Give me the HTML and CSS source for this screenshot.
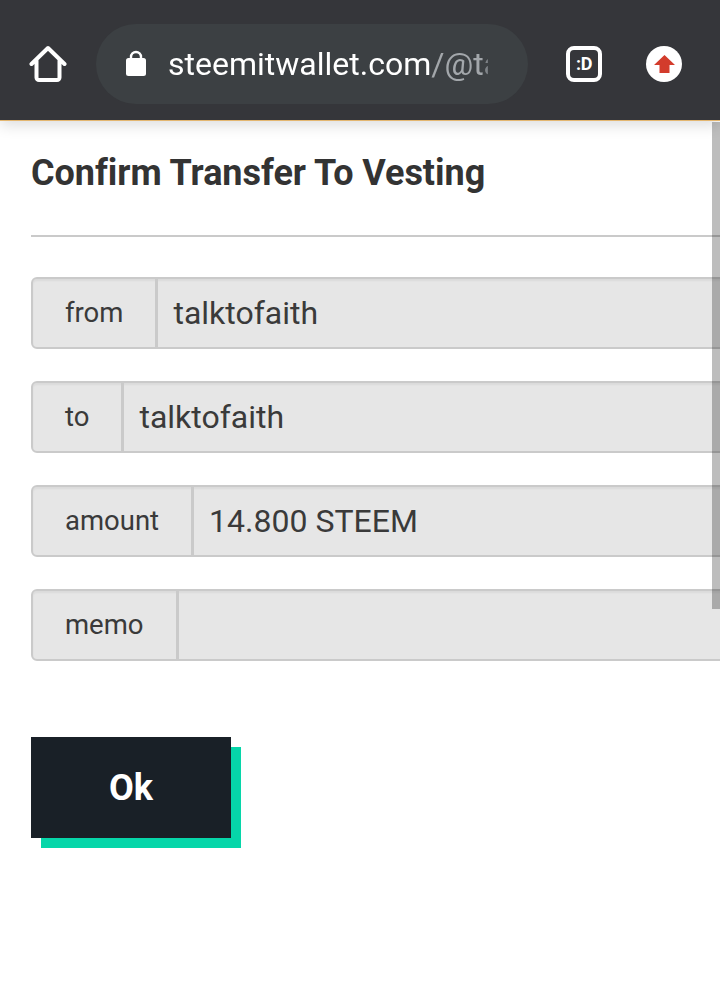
FILE: index.html
```html
<!DOCTYPE html>
<html lang="en">
<head>
<meta charset="utf-8">
<title>Confirm Transfer To Vesting</title>
<link rel="stylesheet" href="styles.css">
</head>
<body>
<header class="toolbar">
  <svg class="icon-home" width="38" height="38" viewBox="0 0 38 38" aria-hidden="true">
    <path d="M2.500 19 19 3 35.500 19M7.500 15.500v17a2.500 2.500 0 0 0 2.500 2.500h18a2.500 2.500 0 0 0 2.500-2.500v-17" fill="none" stroke="#fff" stroke-width="4" stroke-linecap="round" stroke-linejoin="round"/>
  </svg>
  <div class="urlbar">
    <svg class="icon-lock" width="20" height="26" viewBox="0 0 20 26" aria-hidden="true">
      <path d="M5 10V7a5 5 0 0 1 10 0V10" fill="none" stroke="#fff" stroke-width="2.400"/>
      <rect x="0" y="8" width="20" height="18" rx="2.500" fill="#fff"/>
    </svg>
    <span class="url"><span class="url-host">steemitwallet.com</span><span class="url-path">/@ta</span></span>
  </div>
  <div class="tab-count"><span class="tab-count-text">:D</span></div>
  <div class="update-badge">
    <svg width="21" height="18" viewBox="0 0 21 18" aria-hidden="true">
      <path d="M10.500 0 21 10H15.500V18H5.500V10H0Z" fill="#d33c2c"/>
    </svg>
  </div>
</header>
<div class="scrollbar"></div>
<main class="content">
  <h1 class="title">Confirm Transfer To Vesting</h1>
  <hr class="divider">
  <form class="fields">
    <div class="field"><span class="label">from</span><span class="value">talktofaith</span></div>
    <div class="field"><span class="label">to</span><span class="value">talktofaith</span></div>
    <div class="field"><span class="label">amount</span><span class="value">14.800 STEEM</span></div>
    <div class="field"><span class="label">memo</span><span class="value"></span></div>
    <button class="ok" type="button">Ok</button>
  </form>
</main>
</body>
</html>
```
FILE: styles.css
```css
* { box-sizing: border-box; }
html, body { margin: 0; height: 989px; overflow: hidden; background: #fff; }
body { position: relative; font-family: Roboto, "Liberation Sans", sans-serif; color: #333; }

.toolbar {
  height: 121px;
  display: flex;
  align-items: center;
  padding: 7px 0 0 29px;
  background: #35363a;
  border-bottom: 1px solid #e3b670;
  box-shadow: 0 4px 14px rgba(0, 0, 0, .14);
}
.icon-home { flex: none; }
.urlbar {
  flex: none;
  width: 432px;
  height: 80px;
  margin-left: 29px;
  padding-left: 30px;
  display: flex;
  align-items: center;
  border-radius: 40px;
  background: #3c4043;
}
.icon-lock { flex: none; margin-top: -2px; }
.url {
  width: 320px;
  margin-left: 22px;
  overflow: hidden;
  white-space: nowrap;
  font-size: 32px;
  -webkit-mask-image: linear-gradient(to right, #000 98.500%, rgba(0, 0, 0, .5) 100%);
  mask-image: linear-gradient(to right, #000 98.500%, rgba(0, 0, 0, .5) 100%);
}
.url-host { color: #fff; }
.url-path { color: #a3a7ab; }
.tab-count {
  flex: none;
  width: 36px;
  height: 36px;
  margin-left: 38px;
  display: flex;
  align-items: center;
  justify-content: center;
  border: 4px solid #fff;
  border-radius: 8px;
  color: #fff;
  font-size: 18px;
  font-weight: 700;
}
.tab-count-text { letter-spacing: -.5px; }
.update-badge {
  flex: none;
  width: 36px;
  height: 36px;
  margin-left: 44px;
  display: flex;
  align-items: center;
  justify-content: center;
  border-radius: 50%;
  background: #fff;
}
.update-badge svg { display: block; }

.scrollbar {
  position: absolute;
  top: 122px;
  right: 0;
  width: 8px;
  height: 487px;
  background: rgba(0, 0, 0, .26);
  z-index: 2;
}

.content { padding: 0 0 0 31px; width: 1000px; }
.title {
  margin: 0;
  padding-top: 30px;
  height: 114px;
  font-size: 36px;
  line-height: 44px;
  font-weight: 700;
  color: #333;
  letter-spacing: -.04px;
}
.divider {
  margin: 0 0 40px;
  height: 2px;
  border: 0;
  background: #cacaca;
}
.fields { display: flex; flex-direction: column; align-items: flex-start; }
.field {
  width: 100%;
  height: 72px;
  margin-bottom: 32px;
  display: flex;
  border: 2px solid #cacaca;
  border-radius: 6px;
  background: #e6e6e6;
  box-shadow: inset 0 2px 2px rgba(0, 0, 0, .05);
}
.label {
  flex: none;
  padding: 0 32px 2px;
  display: flex;
  align-items: center;
  border-right: 3px solid #cacaca;
  font-size: 27.500px;
  color: #3a3a3a;
}
.value {
  flex: 1;
  padding-left: 15px;
  display: flex;
  align-items: center;
  font-size: 32px;
  color: #3a3a3a;
}
.ok {
  width: 200px;
  height: 101px;
  margin-top: 44px;
  border: 0;
  border-radius: 0;
  background: #192027;
  box-shadow: 10px 10px 0 #06d6a9;
  color: #fff;
  font-family: inherit;
  font-size: 36px;
  font-weight: 700;
}
```
